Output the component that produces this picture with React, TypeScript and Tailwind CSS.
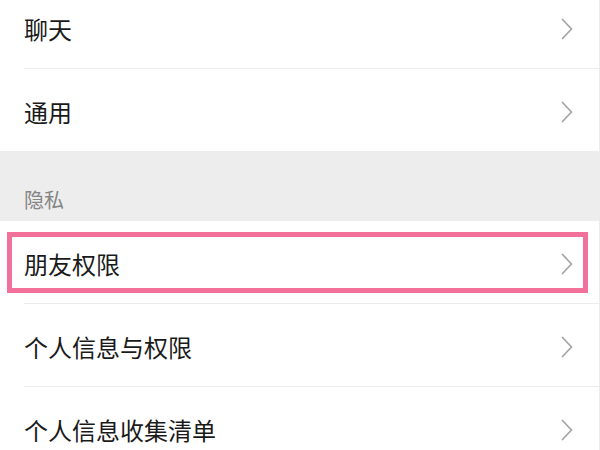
import React from 'react';

const Chevron = () => (
  <svg width="12" height="22" viewBox="0 0 12 22" fill="none" className="shrink-0">
    <path d="M1.5 1.5L10.5 11L1.5 20.5" stroke="#a6a6a6" strokeWidth="1.8" strokeLinecap="round" strokeLinejoin="round" />
  </svg>
);

interface RowProps {
  label: string;
  divider?: boolean;
  highlight?: boolean;
}

const Row: React.FC<RowProps> = ({ label, divider = true, highlight = false }) => (
  <div className="relative bg-white">
    <div className="flex h-[82px] items-center justify-between pl-[24px] pr-[26px] pt-[3px]">
      <span className="text-[24px] leading-none text-[#1a1a1a]">{label}</span>
      <Chevron />
    </div>
    {divider && <div className="ml-[24px] h-[1px] bg-[#ececec]" />}
    {highlight && (
      <div className="pointer-events-none absolute left-[7px] top-[11px] h-[61px] w-[581px] border-[5px] border-[#f2719a]" />
    )}
  </div>
);

export default function App() {
  return (
    <div
      className="h-[450px] w-[600px] overflow-hidden bg-white border-r border-[#ececec]"
      style={{ fontFamily: '"Noto Sans CJK SC", "Noto Sans", sans-serif' }}
    >
      <div className="-mt-[14px]">
        <Row label="聊天" />
        <Row label="通用" divider={false} />
        <div className="flex h-[70px] items-end bg-[#ededed] pb-[11px] pl-[24px]">
          <span className="text-[20px] leading-none text-[#858585]">隐私</span>
        </div>
        <Row label="朋友权限" highlight />
        <Row label="个人信息与权限" />
        <Row label="个人信息收集清单" />
      </div>
    </div>
  );
}
